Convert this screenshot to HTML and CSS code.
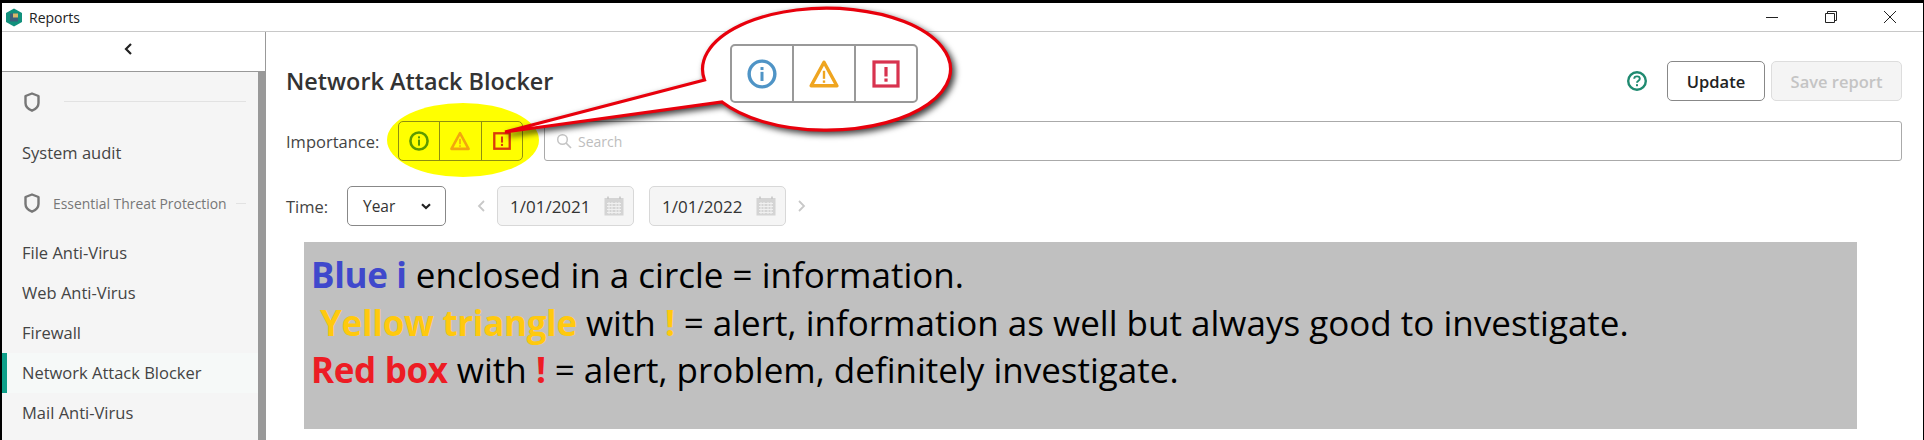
FILE: index.html
```html
<!DOCTYPE html>
<html lang="en">
<head>
<meta charset="UTF-8">
<title>Reports - Network Attack Blocker</title>
<link rel="stylesheet" href="styles.css">
</head>
<body>

<svg class="defs" width="0" height="0">
    <symbol id="i-info" viewBox="0 0 28 28">
        <circle cx="14" cy="14" r="12" fill="none" stroke="currentColor"/>
        <rect x="12.6" y="12" width="2.8" height="8.5" fill="currentColor"/>
        <rect x="12.6" y="7.5" width="2.8" height="2.8" fill="currentColor"/>
    </symbol>
    <symbol id="i-warn" viewBox="0 0 28 28">
        <path d="M14 3 L26 25 L2 25 Z" fill="none" stroke="currentColor" stroke-linejoin="round"/>
        <rect x="12.9" y="11" width="2.2" height="7.5" fill="currentColor"/>
        <rect x="12.9" y="20" width="2.2" height="2.2" fill="currentColor"/>
    </symbol>
    <symbol id="i-alert" viewBox="0 0 28 28">
        <rect x="2" y="2" width="24" height="24" fill="none" stroke="currentColor"/>
        <rect x="12.4" y="7" width="3.2" height="9.5" fill="currentColor"/>
        <rect x="12.4" y="18.5" width="3.2" height="3.2" fill="currentColor"/>
    </symbol>
    <symbol id="i-shield" viewBox="0 0 16 20">
        <path d="M8 1.5 L14.5 4 V11 C14.5 15 11 17.5 8 18.7 C5 17.5 1.5 15 1.5 11 V4 Z" fill="none" stroke="currentColor" stroke-width="2.4" stroke-linejoin="round"/>
    </symbol>
    <symbol id="i-cal" viewBox="0 0 20 20">
        <rect x="0.5" y="2" width="19" height="17.5" fill="#d4d4d4"/>
        <path d="M4 0.5 V3 M16 0.5 V3" stroke="#c4c4c4" stroke-width="1.5"/>
        <path d="M3 7.5 H17 M3 10.5 H17 M3 13.5 H17 M3 16.5 H17 M5 6 V18 M8 6 V18 M12 6 V18 M15 6 V18" stroke="#f0f0f0" stroke-width="1"/>
    </symbol>
</svg>

<div class="frame">
    <div class="titlebar">
        <div class="title-left">
            <svg class="logo" width="18" height="19" viewBox="0 0 18 19">
                <path d="M9 0.5 L17 5 V14 L9 18.5 L1 14 V5 Z" fill="#11907c"/>
                <rect x="5" y="5.5" width="8" height="8" fill="#3d5f7a"/>
                <rect x="8" y="5.5" width="5" height="4" fill="#d8b86a"/>
            </svg>
            <span>Reports</span>
        </div>
        <div class="win-controls">
            <svg width="14" height="14" viewBox="0 0 14 14"><path d="M1 7.5 H13" stroke="#222" stroke-width="1"/></svg>
            <svg width="14" height="14" viewBox="0 0 14 14"><path d="M1.5 3.5 H10.5 V12.5 H1.5 Z M3.5 3.5 V1.5 H12.5 V10.5 H10.5" fill="none" stroke="#222" stroke-width="1"/></svg>
            <svg width="14" height="14" viewBox="0 0 14 14"><path d="M1 1 L13 13 M13 1 L1 13" stroke="#222" stroke-width="1"/></svg>
        </div>
    </div>

    <div class="layout">
        <aside class="sidebar">
            <div class="back">
                <svg width="10" height="14" viewBox="0 0 10 14"><path d="M8 2 L3 7 L8 12" fill="none" stroke="#222" stroke-width="2.2"/></svg>
            </div>
            <div class="side-body">
                <div class="side-list">
                    <div class="group group-first">
                        <svg class="shield" width="16" height="20"><use href="#i-shield"/></svg>
                        <span class="group-line"></span>
                    </div>
                    <div class="item item-audit">System audit</div>
                    <div class="group">
                        <svg class="shield" width="16" height="20"><use href="#i-shield"/></svg>
                        <span class="group-name">Essential Threat Protection</span>
                        <span class="group-line"></span>
                    </div>
                    <div class="item item-file">File Anti-Virus</div>
                    <div class="item">Web Anti-Virus</div>
                    <div class="item">Firewall</div>
                    <div class="item selected">Network Attack Blocker</div>
                    <div class="item">Mail Anti-Virus</div>
                </div>
                <div class="scrollbar"></div>
            </div>
        </aside>

        <main class="content">
            <div class="row row-head">
                <h1>Network Attack Blocker</h1>
                <svg class="help" width="22" height="22" viewBox="0 0 22 22">
                    <circle cx="11" cy="11" r="8.8" fill="none" stroke="#1f8a70" stroke-width="2.4"/>
                    <path d="M8.2 8.8 C8.2 5.6 13.8 5.6 13.8 8.8 C13.8 10.8 11 10.6 11 12.8" fill="none" stroke="#1f8a70" stroke-width="1.9"/>
                    <rect x="10" y="14.2" width="2" height="2" fill="#1f8a70"/>
                </svg>
                <button class="btn">Update</button>
                <button class="btn btn-disabled">Save report</button>
            </div>

            <div class="row row-filter">
                <span class="label label-importance">Importance:</span>
                <div class="seg-wrap">
                    <span class="highlight"></span>
                    <div class="seg seg-small">
                        <div class="seg-cell c-green"><svg width="20" height="20"><use href="#i-info"/></svg></div>
                        <div class="seg-cell c-orange"><svg width="20" height="20"><use href="#i-warn"/></svg></div>
                        <div class="seg-cell c-red"><svg width="18" height="18"><use href="#i-alert"/></svg></div>
                    </div>
                </div>
                <div class="search">
                    <svg width="16" height="16" viewBox="0 0 16 16"><circle cx="6.5" cy="6.5" r="4.8" fill="none" stroke="#c4c4c4" stroke-width="1.5"/><path d="M10 10 L15 15" stroke="#c4c4c4" stroke-width="1.7"/></svg>
                    <span>Search</span>
                </div>
            </div>

            <div class="row row-time">
                <span class="label label-time">Time:</span>
                <div class="select">
                    <span>Year</span>
                    <svg width="10" height="7" viewBox="0 0 10 7"><path d="M1 1.2 L5 5 L9 1.2" fill="none" stroke="#222" stroke-width="2.2"/></svg>
                </div>
                <svg class="chev chev-left" width="9" height="14" viewBox="0 0 9 14"><path d="M7 2 L2 7 L7 12" fill="none" stroke="#c8c8c8" stroke-width="1.8"/></svg>
                <div class="date">
                    <span>1/01/2021</span>
                    <svg width="20" height="20"><use href="#i-cal"/></svg>
                </div>
                <div class="date">
                    <span>1/01/2022</span>
                    <svg width="20" height="20"><use href="#i-cal"/></svg>
                </div>
                <svg class="chev chev-right" width="9" height="14" viewBox="0 0 9 14"><path d="M2 2 L7 7 L2 12" fill="none" stroke="#c8c8c8" stroke-width="1.8"/></svg>
            </div>

            <div class="note">
                <p><b class="blue">Blue i</b> enclosed in a circle = information.</p>
                <p> <b class="yellow">Yellow triangle</b> with <b class="yellow">!</b> = alert, information as well but always good to investigate.</p>
                <p><b class="red">Red box</b> with <b class="red">!</b> = alert, problem, definitely investigate.</p>
            </div>
        </main>
    </div>
</div>

<!-- red speech bubble drawn over the page -->
<div class="callout">
    <svg width="1924" height="440" viewBox="0 0 1924 440">
        <path class="bubble" d="M704.5 80 L505 132 L722 102 A124 61 0 1 0 704.5 80 Z"/>
    </svg>
    <div class="seg seg-big">
        <div class="seg-cell c-blue"><svg width="30" height="30"><use href="#i-info"/></svg></div>
        <div class="seg-cell c-amber"><svg width="30" height="30"><use href="#i-warn"/></svg></div>
        <div class="seg-cell c-crimson"><svg width="28" height="28"><use href="#i-alert"/></svg></div>
    </div>
</div>

</body>
</html>
```

FILE: styles.css
```css
/* Global Styles */
html, body {
    margin: 0;
    padding: 0;
    height: 440px;
    overflow: hidden;
}

body {
    font-family: "Open Sans", "Noto Sans", sans-serif;
    color: #333;
    background-color: #000;
}

.defs {
    position: absolute;
}

.frame {
    height: 437px;
    padding: 3px 1px 0 2px;
    display: flex;
    flex-direction: column;
}

/* Title bar */
.titlebar {
    height: 28px;
    flex: none;
    background-color: #fff;
    border-bottom: 1px solid #c8c8c8;
    display: flex;
    justify-content: space-between;
    align-items: center;
}

.title-left {
    display: flex;
    align-items: center;
    gap: 6px;
    padding-left: 3px;
    font-size: 14px;
    color: #222;
}

.win-controls {
    display: flex;
    gap: 45px;
    padding-right: 26px;
}

/* Sidebar */
.layout {
    flex: 1;
    display: flex;
    min-height: 0;
    background-color: #fff;
}

.sidebar {
    width: 264px;
    flex: none;
    display: flex;
    flex-direction: column;
}

.back {
    height: 33px;
    flex: none;
    border-right: 1px solid #999;
    border-bottom: 1px solid #999;
    display: flex;
    align-items: center;
    justify-content: center;
    padding: 0 12px 6px 0;
}

.side-body {
    flex: 1;
    display: flex;
    min-height: 0;
}

.side-list {
    flex: 1;
    background-color: #f5f5f5;
    color: #444;
    font-size: 16.5px;
    padding-top: 9px;
}

.scrollbar {
    width: 8px;
    background-color: #999;
}

.group {
    height: 40px;
    display: flex;
    align-items: center;
    padding: 0 12px 0 22px;
}

.group-first {
    height: 41px;
}

.group-name {
    font-size: 13.9px;
    color: #777;
    margin-left: 13px;
    white-space: nowrap;
}

.group-line {
    flex: 1;
    height: 1px;
    background-color: #e2e2e2;
    margin-left: 9px;
}

.group-first .group-line {
    margin-left: 24px;
}

.shield {
    color: #777;
    flex: none;
}

.item {
    height: 40px;
    line-height: 40px;
    padding-left: 20px;
    white-space: nowrap;
}

.item-audit {
    height: 61px;
    padding-top: 11px;
    box-sizing: border-box;
}

.item-file {
    margin-top: 10px;
}

.item.selected {
    background-color: #f6f9f8;
    box-shadow: inset 5px 0 0 #0fa08a;
}

/* Main content */
.content {
    flex: 1;
    min-width: 0;
    padding: 29px 21px 0 20px;
}

.row {
    display: flex;
    align-items: center;
    height: 40px;
}

.row-filter {
    margin-top: 20px;
}

.row-time {
    margin-top: 25px;
}

h1 {
    flex: 1;
    margin: 0;
    font-size: 23.4px;
    font-weight: 600;
    color: #333;
}

.help {
    margin-right: 19px;
}

.btn {
    height: 40px;
    font-family: inherit;
    font-size: 16.5px;
    font-weight: 600;
    color: #222;
    background-color: #fff;
    border: 1px solid #888;
    border-radius: 5px;
    width: 98px;
    padding: 0;
}

.btn-disabled {
    width: 131px;
    margin-left: 6px;
    color: #c4c4c4;
    background-color: #f4f4f4;
    border-color: #ddd;
}

.label {
    font-size: 16.5px;
    color: #444;
    flex: none;
}

.label-importance {
    width: 112px;
}

.label-time {
    width: 61px;
}

/* Icon toggle group */
.seg-wrap {
    position: relative;
    isolation: isolate;
    flex: none;
}

.highlight {
    position: absolute;
    left: -11px;
    top: -18px;
    width: 152px;
    height: 74px;
    border-radius: 50%;
    background-color: #ffff00;
    z-index: -1;
}

.seg {
    display: flex;
    box-sizing: border-box;
    border-radius: 5px;
    border: 1px solid #8a8a8a;
}

.seg-cell {
    flex: 1;
    display: flex;
    align-items: center;
    justify-content: center;
    border-left: 1px solid #8a8a8a;
}

.seg-cell:first-child {
    border-left: none;
}

.seg-small {
    width: 125px;
    height: 40px;
    border-color: #8f8f10;
    stroke-width: 3.6px;
}

.seg-small .seg-cell {
    border-color: #8f8f10;
}

.c-green { color: #5c9a00; }
.c-orange { color: #f2a70e; }
.c-red { color: #d93a0c; }
.c-blue { color: #4f94c6; }
.c-amber { color: #efa520; }
.c-crimson { color: #d8334f; }

.search {
    flex: 1;
    height: 40px;
    margin-left: 21px;
    box-sizing: border-box;
    border: 1px solid #aaa;
    border-radius: 3px;
    display: flex;
    align-items: center;
    gap: 6px;
    padding-left: 11px;
    font-size: 14px;
    color: #bdbdbd;
}

.select {
    width: 99px;
    height: 40px;
    box-sizing: border-box;
    border: 1px solid #888;
    border-radius: 5px;
    display: flex;
    align-items: center;
    justify-content: space-between;
    padding: 0 14px 0 15px;
    font-size: 15.5px;
    color: #333;
}

.chev-left {
    margin: 0 11px 0 31px;
}

.chev-right {
    margin-left: 11px;
}

.date {
    width: 137px;
    height: 40px;
    box-sizing: border-box;
    border: 1px solid #d8d8d8;
    border-radius: 5px;
    background-color: #f5f5f5;
    display: flex;
    align-items: center;
    justify-content: space-between;
    padding: 0 9px 0 12px;
    font-size: 17px;
    color: #333;
}

.date + .date {
    margin-left: 15px;
}

/* Grey explanation box */
.note {
    margin: 16px 0 0 18px;
    width: 1553px;
    height: 187px;
    box-sizing: border-box;
    padding: 9px 0 0 7px;
    background-color: #c0c0c0;
    color: #000;
    font-size: 35px;
    line-height: 47.5px;
}

.note p {
    margin: 0;
    white-space: pre;
}

.note b {
    letter-spacing: -0.33px;
}

.blue { color: #3f48cc; }
.yellow { color: #ffc90e; }
.red { color: #ed1c24; }

/* Speech bubble */
.callout {
    position: absolute;
    left: 0;
    top: 0;
    width: 1924px;
    height: 440px;
    pointer-events: none;
}

.bubble {
    fill: #fff;
    stroke: #e8000c;
    stroke-width: 3.2px;
    filter: drop-shadow(3px 3px 3px rgba(0, 0, 0, 0.75));
}

.seg-big {
    position: absolute;
    left: 730px;
    top: 44px;
    width: 188px;
    height: 59px;
    border-width: 2px;
    border-color: #999;
    background-color: #fff;
    stroke-width: 3.2px;
}

.seg-big .seg-cell {
    border-left-width: 2px;
    border-color: #999;
}
```
